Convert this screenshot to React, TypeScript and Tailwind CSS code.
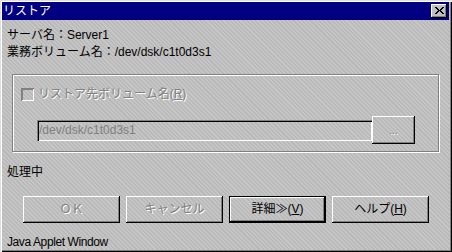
import React from 'react';

const raised = 'shadow-[inset_-1px_-1px_0_#000,inset_1px_1px_0_#fff,inset_-2px_-2px_0_#808080]';
const disabledText = 'text-[#808080] [text-shadow:1px_1px_0_#fff]';

const Btn = ({ children, disabled, isDefault }: { children: React.ReactNode; disabled?: boolean; isDefault?: boolean }) => (
  <div className={`w-[97px] h-[27px] ${isDefault ? 'border border-black' : ''}`}>
    <div className={`w-full h-full flex items-center justify-center ${raised} ${disabled ? disabledText : 'text-black'}`}>
      {children}
    </div>
  </div>
);

export default function App() {
  return (
    <div className="w-[452px] h-[252px] overflow-hidden flex flex-col pt-[2px] pl-[2px] pr-[3px] pb-[2px] bg-[#c0c0c0] bg-[repeating-linear-gradient(45deg,#c6c6c6_0px,#c6c6c6_1.5px,#b9b9b9_1.5px,#b9b9b9_3px)] shadow-[inset_1px_1px_0_#dfdfdf,inset_2px_2px_0_#fff,inset_-1px_-1px_0_#000,inset_-2px_-2px_0_#808080] font-['Liberation_Sans','Noto_Sans_CJK_JP',sans-serif] text-[12px] leading-[17px] text-black">
      {/* Title bar */}
      <div className="h-[18px] shrink-0 bg-[#000080] flex items-center justify-between pl-[1px] pr-[2px]">
        <span className="text-white leading-[18px]">リストア</span>
        <div className={`w-[16px] h-[14px] bg-[#c0c0c0] flex items-center justify-center ${raised}`}>
          <svg width="9" height="8" viewBox="0 0 9 8" shapeRendering="crispEdges" className="-mt-[1px]">
            <path d="M0 0h2v1h1v1h1v1h1v-1h1v-1h1v-1h2v1h-1v1h-1v1h-1v1h1v1h1v1h1v1h-2v-1h-1v-1h-1v-1h-1v1h-1v1h-1v1h-2v-1h1v-1h1v-1h1v-1h-1v-1h-1v-1h-1z" fill="#000" />
          </svg>
        </div>
      </div>

      {/* Body */}
      <div className="flex flex-col pl-[5px] pt-[7px]">
        <div className="h-[17px]">サーバ名：Server1</div>
        <div className="h-[17px]">業務ボリューム名：/dev/dsk/c1t0d3s1</div>

        {/* Group box */}
        <div className="mt-[13px] ml-[5px] w-[427px] border border-[#808080] shadow-[inset_1px_1px_0_#fff,1px_1px_0_#fff] flex flex-col pl-[8px] pt-[11px] pb-[7px]">
          <div className="h-[17px] flex items-center gap-[4px]">
            <div className="w-[13px] h-[13px] shadow-[inset_1px_1px_0_#808080,inset_-1px_-1px_0_#fff,inset_2px_2px_0_#808080]" />
            <span className={disabledText}>
              リストア先ボリューム名(<span className="underline">R</span>)
            </span>
          </div>
          <div className="mt-[13px] ml-[16px] h-[28px] flex items-center">
            <div className="w-[335px] h-[21px] flex items-center pl-[2px] shadow-[inset_1px_1px_0_#808080,inset_2px_2px_0_#000,inset_-1px_-1px_0_#fff] text-[#808080]">
              /dev/dsk/c1t0d3s1
            </div>
            <div className={`w-[43px] h-[28px] flex items-center justify-center text-[10px] ${raised} ${disabledText}`}>
              ...
            </div>
          </div>
        </div>

        <div className="h-[17px] mt-[12px]">処理中</div>

        {/* Buttons */}
        <div className="mt-[15px] ml-[16px] flex gap-[6px]">
          <Btn disabled>ＯＫ</Btn>
          <Btn disabled>キャンセル</Btn>
          <Btn isDefault>
            詳細≫(<span className="underline">V</span>)
          </Btn>
          <Btn>
            ヘルプ(<span className="underline">H</span>)
          </Btn>
        </div>

        <div className="h-[17px] mt-[11px] tracking-[-0.4px]">Java Applet Window</div>
      </div>
    </div>
  );
}
